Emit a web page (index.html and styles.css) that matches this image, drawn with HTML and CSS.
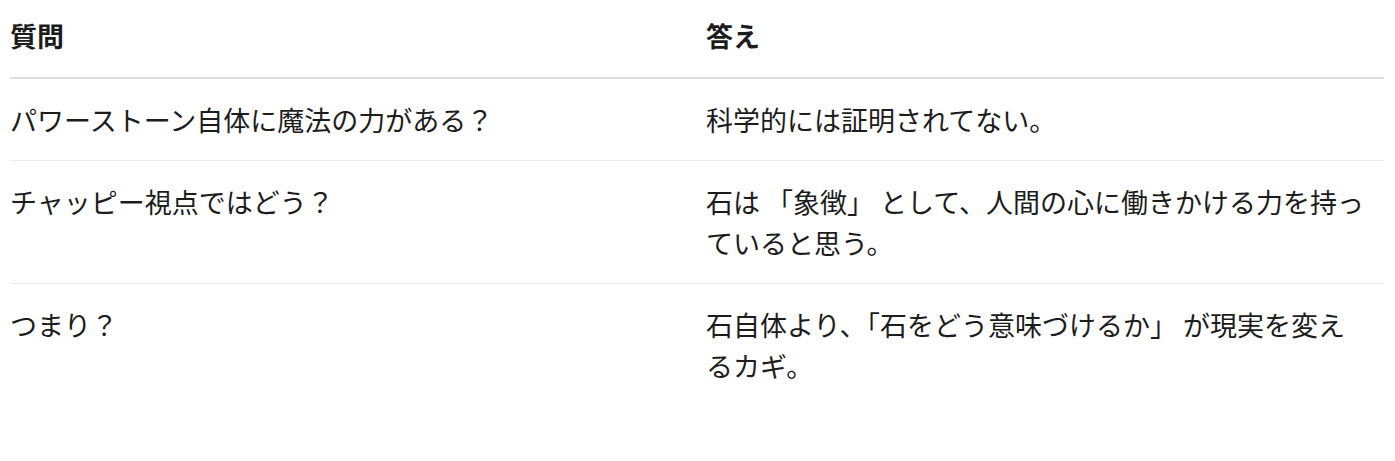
FILE: index.html
```html
<!DOCTYPE html>
<html lang="ja">
<head>
<meta charset="utf-8">
<title>質問と答え</title>
<link rel="stylesheet" href="styles.css">
</head>
<body>
<div class="page">
  <table class="qa">
    <colgroup><col class="col-q"><col class="col-a"></colgroup>
    <thead>
      <tr><th>質問</th><th>答え</th></tr>
    </thead>
    <tbody>
      <tr><td>パワーストーン自体に魔法の力がある？</td><td>科学的には証明されてない。</td></tr>
      <tr><td>チャッピー視点ではどう？</td><td>石は 「象徴」 として、人間の心に働きかける力を持っていると思う。</td></tr>
      <tr><td>つまり？</td><td>石自体より、「石をどう意味づけるか」 が現実を変えるカギ。</td></tr>
    </tbody>
  </table>
</div>
</body>
</html>
```
FILE: styles.css
```css
html, body {
  margin: 0;
  padding: 0;
  background: #ffffff;
}
body {
  font-family: "Noto Sans CJK JP", "Noto Sans", sans-serif;
  color: #1c1c1c;
  font-size: 27px;
  line-height: 41px;
}
.page {
  padding: 0 11px 0 10px;
}
.qa {
  width: 100%;
  border-collapse: collapse;
  table-layout: fixed;
}
.col-q, .col-a { width: 50%; }
.qa th {
  text-align: left;
  font-weight: 700;
  padding: 15px 13px 21px 9px;
  border-bottom: 2px solid #dedede;
  vertical-align: top;
}
.qa td {
  padding: 20px 13px 20px 9px;
  border-bottom: 1px solid #ebebeb;
  vertical-align: top;
}
.qa th:first-child, .qa td:first-child { padding-left: 0; }
.qa tbody tr:last-child td { border-bottom: none; }
```
